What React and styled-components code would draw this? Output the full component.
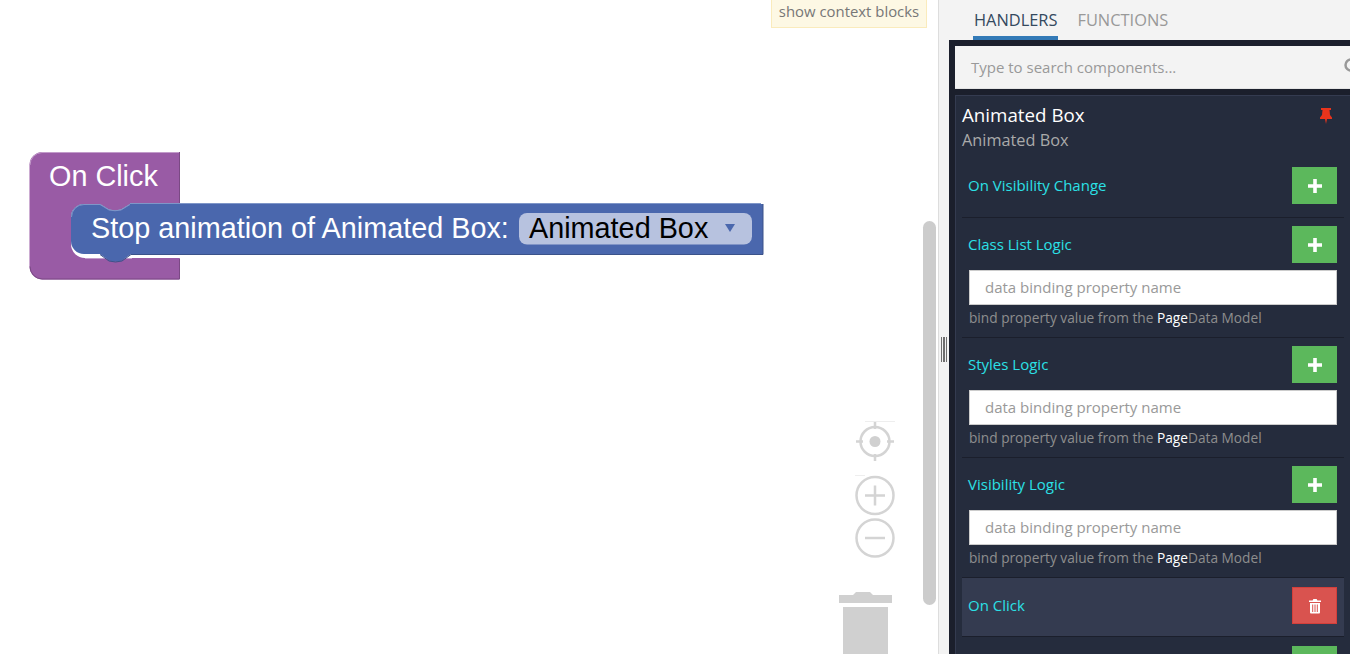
import React from "react";
import styled, { createGlobalStyle } from "styled-components";

const Global = createGlobalStyle`
  html, body { margin: 0; padding: 0; height: 654px; overflow: hidden; background: #fff; }
  #root { height: 654px; }
  * { box-sizing: border-box; }
`;

const Page = styled.div`
  display: flex;
  width: 1350px;
  height: 654px;
  overflow: hidden;
  font-family: "Open Sans", sans-serif;
`;

const Canvas = styled.div`
  position: relative;
  width: 938px;
  height: 654px;
  background: #fff;
  flex: none;
`;

const ContextTip = styled.div`
  position: absolute;
  left: 771px;
  top: -1px;
  width: 156px;
  height: 29px;
  background: #fdf8e4;
  border: 1px solid #faebbc;
  color: #777;
  font-size: 14.9px;
  line-height: 23px;
  text-align: center;
  white-space: nowrap;
`;

const BlockArt = styled.svg`
  position: absolute;
  left: 0;
  top: 0;
`;

const BlockText = styled.text`
  font-family: "Liberation Sans", Arial, sans-serif;
  font-size: 28.8px;
`;

const ScrollThumb = styled.div`
  position: absolute;
  left: 923px;
  top: 221px;
  width: 13px;
  height: 384px;
  background: #ccc;
  border-radius: 7px;
`;

const ControlArt = styled.svg`
  position: absolute;
  left: 830px;
  top: 415px;
`;

const Side = styled.div`
  flex: 1;
  height: 654px;
  display: flex;
  background: #f3f3f3;
  border-left: 1px solid #ddd;
  position: relative;
`;

const Grip = styled.div`
  position: absolute;
  left: 2px;
  top: 337px;
  width: 6.5px;
  height: 25px;
  background: repeating-linear-gradient(90deg, #6e6e6e 0 1.5px, #f3f3f3 1.5px 2.5px);
`;

const SideInner = styled.div`
  margin-left: 10px;
  flex: 1;
  display: flex;
  flex-direction: column;
  min-width: 0;
`;

const Tabs = styled.div`
  height: 40px;
  display: flex;
  padding-left: 24px;
  gap: 5px;
  flex: none;
`;

const Tab = styled.div`
  height: 40px;
  padding: 9px 1px 0;
  font-size: 16.4px;
  line-height: 22px;
  color: ${(p) => (p.$active ? "#34495e" : "#999")};
  border-bottom: 4px solid ${(p) => (p.$active ? "#337ab7" : "transparent")};
  margin-right: ${(p) => (p.$active ? "13px" : "0")};
`;

const Dark = styled.div`
  flex: 1;
  background: #1b1f2c;
  padding: 6px 0 0 6px;
  overflow: hidden;
`;

const Search = styled.div`
  height: 43px;
  background: #f3f3f3;
  border-bottom: 1px solid #e4e4e4;
  position: relative;
  padding-left: 16px;
  color: #999;
  font-size: 15px;
  line-height: 43px;
  overflow: hidden;
`;

const SearchIcon = styled.svg`
  position: absolute;
  right: -12px;
  top: 12px;
`;

const Panel = styled.div`
  margin-top: 6px;
  background: #252c3d;
  border-top: 1px solid #343b50;
  border-left: 1px solid #343b50;
  padding: 0 6px 0 6px;
  height: 560px;
  overflow: hidden;
`;

const PanelHead = styled.div`
  height: 62px;
  position: relative;
`;

const Title = styled.div`
  font-size: 18.75px;
  line-height: 24px;
  color: #fff;
  padding-top: 7px;
`;

const Subtitle = styled.div`
  font-size: 16.3px;
  line-height: 22px;
  color: #aaa;
  margin-top: 2px;
`;

const Pin = styled.svg`
  position: absolute;
  right: 11px;
  top: 11px;
`;

const Row = styled.div`
  padding: ${(p) => p.$top ?? 9}px 7px 0 6px;
  height: ${(p) => p.$h}px;
  background: ${(p) => (p.$selected ? "#343b50" : "transparent")};
  border-bottom: 1px solid #1b1f2c;
`;

const RowTop = styled.div`
  display: flex;
  justify-content: space-between;
  align-items: center;
  height: 37px;
`;

const Label = styled.div`
  color: #2be0e6;
  font-size: 15px;
  padding-bottom: 2px;
`;

const ActionButton = styled.div`
  width: 45px;
  height: 37px;
  display: flex;
  align-items: center;
  justify-content: center;
  background: ${(p) => (p.$danger ? "#d9534f" : "#5cb85c")};
  border: 1px solid ${(p) => (p.$danger ? "#d43f3a" : "#5cb85c")};
`;

const BindInput = styled.div`
  margin: 7px 0 0 1px;
  height: 35px;
  background: #fff;
  border: 1px solid #ccc;
  color: #999;
  font-size: 15px;
  line-height: 33px;
  padding-left: 15px;
`;

const Help = styled.div`
  margin: 3px 0 0 1px;
  color: #8e8e8e;
  font-size: 13.7px;
  line-height: 20px;
  white-space: nowrap;
  b { color: #fff; font-weight: 400; }
`;

const Plus = () => (
  <svg width="14" height="14" viewBox="0 0 14 14">
    <path d="M5.200 0h3.600v5.200H14v3.600H8.800V14H5.200V8.800H0V5.200h5.200z" fill="#fff" />
  </svg>
);

const Trash = () => (
  <svg width="14" height="16" viewBox="0 0 14 16">
    <path d="M1 2.500h3.600L5.400 1h3.200l.8 1.500H13v1.400H1z" fill="#fff" />
    <path d="M2 5h10v9.500a1 1 0 0 1-1 1H3a1 1 0 0 1-1-1z" fill="#fff" />
    <path d="M4.700 6.500v7.500M7 6.500v7.500M9.300 6.500v7.500" stroke="#d9534f" strokeWidth="1" />
  </svg>
);

const LogicRow = ({ title }) => (
  <Row $h={120} $top={8}>
    <RowTop>
      <Label>{title}</Label>
      <ActionButton><Plus /></ActionButton>
    </RowTop>
    <BindInput>data binding property name</BindInput>
    <Help>bind property value from the <b>Page</b>Data Model</Help>
  </Row>
);

export default function App() {
  return (
    <Page>
      <Global />
      <Canvas>
        <ContextTip>show context blocks</ContextTip>
        <BlockArt width="800" height="300" viewBox="0 0 800 300">
          <path d="M29.500 165a13 13 0 0 1 13-13H179.500V204H130l-9 5.500q-6 1.500-12 0l-9-5.500H84a13 13 0 0 0-13 13v27a14 14 0 0 0 14 14H179.500V279.500H42.500a13 13 0 0 1-13-13z" fill="#995ba5" />
          <path d="M30 165a12.500 12.500 0 0 1 12-12.500H179" fill="none" stroke="#c29bca" strokeWidth="1" />
          <path d="M30 266.500a12.500 12.500 0 0 0 12 12.500H179.500V258.500" fill="none" stroke="#7a4984" strokeWidth="1" />
          <path d="M179.500 152v51" stroke="#7a4984" strokeWidth="1" />
          <path d="M132 258.500H85" fill="none" stroke="#c29bca" strokeWidth="1" />
          <path d="M71 217a13 13 0 0 1 13-13h16l9 5.500q6 1.500 12 0l9-5.500H763V254H131l-9 6.500q-6.500 2-13 0l-9-6.500H84a13 13 0 0 1-13-13z" fill="#4a67ad" />
          <path d="M71.500 217a12.500 12.500 0 0 1 12.500-12.500h16l9 5.500q6 1.500 12 0l9-5.500" fill="none" stroke="#7f96c8" strokeWidth="1" />
          <path d="M130 203.500H761" fill="none" stroke="#7f96c8" strokeWidth="1" />
          <path d="M763 204V254.500H131" fill="none" stroke="#3b5289" strokeWidth="1" />
          <path d="M100 254.500l9 6.500q6.500 2 13 0l9-6.500" fill="none" stroke="#3b5289" strokeWidth="1" />
          <BlockText x="91" y="238" fill="#fff">Stop animation of Animated Box:</BlockText>
          <rect x="519" y="213" width="233" height="31.500" rx="8" fill="#b7c2df" />
          <BlockText x="529" y="238" fill="#000">Animated Box</BlockText>
          <path d="M725 224h10l-5 8z" fill="#4a67ad" />
          <BlockText x="49" y="186" fill="#fff">On Click</BlockText>
        </BlockArt>
        <ScrollThumb />
        <ControlArt width="70" height="239" viewBox="0 0 70 239">
          <path d="M35 6.500h30M25 60.500h10" stroke="#eee" strokeWidth="1" />
          <g fill="none" stroke="#d4d4d4" strokeWidth="2.500">
            <circle cx="45" cy="26.500" r="14.500" />
            <path d="M45 7v7M45 39v7M26 26.500h7M57 26.500h7" />
            <circle cx="45" cy="80.500" r="18.500" />
            <path d="M35 80.500h20M45 70.500v20" />
            <circle cx="45" cy="123" r="18.500" />
            <path d="M35 123h20" />
          </g>
          <circle cx="45" cy="26.500" r="5.500" fill="#d0d0d0" />
          <path d="M9 188v-8H23l3-3h14l3 3h19v8zM13 192h45v47H13z" fill="#d0d0d0" />
        </ControlArt>
      </Canvas>
      <Side>
        <Grip />
        <SideInner>
          <Tabs>
            <Tab $active>HANDLERS</Tab>
            <Tab>FUNCTIONS</Tab>
          </Tabs>
          <Dark>
            <Search>
              Type to search components...
              <SearchIcon width="18" height="18" viewBox="0 0 18 18">
                <circle cx="7" cy="7" r="5.500" fill="none" stroke="#999" strokeWidth="2.500" />
                <path d="M11 11l5 5" stroke="#999" strokeWidth="2.500" />
              </SearchIcon>
            </Search>
            <Panel>
              <PanelHead>
                <Title>Animated Box</Title>
                <Subtitle>Animated Box</Subtitle>
                <Pin width="14" height="18" viewBox="0 0 14 18">
                  <path d="M2 1h10v2H10.500l.5 5 2 2.500v1.500H8l-1 5-1-5H1v-1.500L3 8l.5-5H2z" fill="#e8341c" />
                </Pin>
              </PanelHead>
              <Row $h={60}>
                <RowTop>
                  <Label>On Visibility Change</Label>
                  <ActionButton><Plus /></ActionButton>
                </RowTop>
              </Row>
              <LogicRow title="Class List Logic" />
              <LogicRow title="Styles Logic" />
              <LogicRow title="Visibility Logic" />
              <Row $h={59} $selected>
                <RowTop>
                  <Label>On Click</Label>
                  <ActionButton $danger><Trash /></ActionButton>
                </RowTop>
              </Row>
              <Row $h={60}>
                <RowTop>
                  <Label />
                  <ActionButton><Plus /></ActionButton>
                </RowTop>
              </Row>
            </Panel>
          </Dark>
        </SideInner>
      </Side>
    </Page>
  );
}
